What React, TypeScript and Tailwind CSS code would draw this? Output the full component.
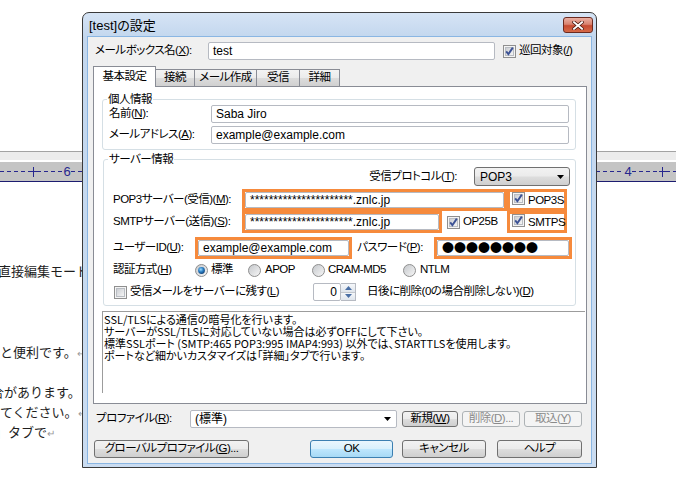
import React from "react";

const DASH =
  "h-px bg-[repeating-linear-gradient(90deg,#26268e_0px,#26268e_4px,transparent_4px,transparent_7px)]";

const U = ({ children }: { children: React.ReactNode }) => (
  <span className="underline underline-offset-[1px]">{children}</span>
);

const Check = ({ checked }: { checked?: boolean }) => (
  <svg width="13" height="13" viewBox="0 0 13 13" className="shrink-0">
    <defs>
      <linearGradient id="cbInner" x1="0" y1="0" x2="1" y2="1">
        <stop offset="0" stopColor="#c9ccd1" />
        <stop offset="1" stopColor="#f7f7f7" />
      </linearGradient>
    </defs>
    <rect x="0.5" y="0.5" width="12" height="12" fill="#f4f4f4" stroke="#8f8f8f" />
    <rect x="2.5" y="2.5" width="8" height="8" fill="url(#cbInner)" stroke="#b9bdc3" />
    {checked && (
      <path d="M3.2 6.4 L5.4 9.2 L9.8 2.6" fill="none" stroke="#3c5295" strokeWidth="1.9" />
    )}
  </svg>
);

const Radio = ({ checked }: { checked?: boolean }) => (
  <svg width="13" height="13" viewBox="0 0 13 13" className="shrink-0">
    <defs>
      <linearGradient id="rdBg" x1="0" y1="0" x2="1" y2="1">
        <stop offset="0" stopColor="#c3c6ca" />
        <stop offset="1" stopColor="#f8f8f8" />
      </linearGradient>
      <radialGradient id="rdDot" cx="0.4" cy="0.35" r="0.7">
        <stop offset="0" stopColor="#9edbff" />
        <stop offset="0.5" stopColor="#2b7fc4" />
        <stop offset="1" stopColor="#0f3e74" />
      </radialGradient>
    </defs>
    <circle cx="6.5" cy="6.5" r="6" fill="url(#rdBg)" stroke="#8f8f8f" />
    {checked && <circle cx="6.5" cy="6.5" r="3.4" fill="url(#rdDot)" />}
  </svg>
);

const Arrow = () => (
  <svg width="7" height="4" viewBox="0 0 7 4" className="shrink-0">
    <path d="M0 0H7L3.5 4Z" fill="#000" />
  </svg>
);

const Box = ({ className, children }: { className: string; children?: React.ReactNode }) => (
  <div
    className={
      "bg-white border border-[#b6bac2] rounded-[2px] flex items-center px-[4px] text-[12px] tracking-normal whitespace-nowrap overflow-hidden " +
      className
    }
  >
    {children}
  </div>
);

const BTN =
  "flex items-center justify-center rounded-[3px] border border-[#707070] bg-[linear-gradient(#f2f2f2,#ebebeb_48%,#dddddd_52%,#cfcfcf)] whitespace-nowrap";
const BTN_OFF =
  "flex items-center justify-center rounded-[3px] border border-[#adb2b5] bg-[#f4f4f4] text-[#8a8a8a] whitespace-nowrap";

function Background() {
  return (
    <div className="flex flex-col">
      <div className="h-[151px]" />
      <div className="h-px bg-[#a3a3a3]" />
      <div className="h-[8px] bg-[#ececec]" />
      <div className="h-[2px] bg-white" />
      <div className="h-[20px] bg-[#c4c4c4] border-b border-[#1c1c70] flex items-center text-[#26268e] text-[13px] leading-none">
        <div className={DASH + " w-[30px]"} />
        <div className="w-[7px] h-[10px] flex justify-center bg-[linear-gradient(#26268e,#26268e)] bg-no-repeat bg-center bg-[length:100%_1px]">
          <div className="w-px h-full bg-[#26268e]" />
        </div>
        <div className={DASH + " w-[26px]"} />
        <div className="w-[8px] text-center">6</div>
        <div className={DASH + " flex-1"} />
        <div className="w-[8px] text-center">4</div>
        <div className={DASH + " w-[27px]"} />
        <div className="w-[7px] h-[10px] flex justify-center bg-[linear-gradient(#26268e,#26268e)] bg-no-repeat bg-center bg-[length:100%_1px]">
          <div className="w-px h-full bg-[#26268e]" />
        </div>
        <div className={DASH + " w-[10px]"} />
      </div>
      <div className="font-['Noto_Sans_CJK_JP',sans-serif] [font-feature-settings:normal] text-[13px] leading-[20px] text-[#1e1e1e] whitespace-nowrap">
        <div className="mt-[79px] h-[20px] -ml-[2px]">直接編集モード</div>
        <div className="mt-[61px] h-[20px]">
          と便利です。<span className="text-[10px] text-[#999]">↵</span>
        </div>
        <div className="mt-[20px] h-[20px] -ml-[9px]">合があります。</div>
        <div className="h-[20px]">
          てください。<span className="text-[10px] text-[#999]">↵</span>
        </div>
        <div className="h-[20px] -ml-[5px]">
          <span className="text-[#b03a6a]">」</span>タブで<span className="text-[10px] text-[#999]">↵</span>
        </div>
      </div>
    </div>
  );
}

function CloseBtn() {
  return (
    <div className="ml-auto w-[30px] h-[16px] rounded-[3px] border border-[#6b2a20] bg-[linear-gradient(#eab0a3,#d9826f_45%,#c64a31_55%,#d66a48)] flex items-center justify-center">
      <svg width="12" height="9" viewBox="0 0 12 9">
        <path d="M2 1.2L10 7.8M10 1.2L2 7.8" stroke="#4b1a12" strokeWidth="3.4" strokeLinecap="square" />
        <path d="M2 1.2L10 7.8M10 1.2L2 7.8" stroke="#fff" strokeWidth="1.9" strokeLinecap="square" />
      </svg>
    </div>
  );
}

function Tabs() {
  return (
    <div className="mt-[6px] h-[20px] flex items-end pl-[5px] whitespace-nowrap">
      <div className="relative z-10 -mb-px w-[63px] h-[21px] bg-white border border-b-0 border-[#898c95] flex items-start justify-center pt-[1px]">
        基本設定
      </div>
      {[
        ["接続", "w-[40px]"],
        ["メール作成", "w-[63px]"],
        ["受信", "w-[44px]"],
        ["詳細", "w-[41px]"],
      ].map(([t, w]) => (
        <div
          key={t}
          className={
            w +
            " -ml-px h-[17px] border border-b-0 border-[#898c95] bg-[linear-gradient(#f3f3f3,#ebebeb_50%,#dcdcdc_52%,#d0d0d0)] flex items-center justify-center"
          }
        >
          {t}
        </div>
      ))}
    </div>
  );
}

function Orange({ className, children }: { className: string; children?: React.ReactNode }) {
  return <div className={"border-[3px] border-[#f68a3c] flex items-stretch " + className}>{children}</div>;
}

function Panel() {
  return (
    <div className="relative ml-[5px] w-[494px] h-[318px] border border-[#898c95] bg-white flex flex-col whitespace-nowrap">
      <fieldset className="ml-[8px] mt-[6px] w-[474px] border border-[#d5dfe5] rounded-[3px] pb-[5px]">
        <legend className="ml-[4px] px-[1px] leading-[12px]">個人情報</legend>
        <div className="h-[18px] flex items-center pl-[6px]">
          <div className="w-[102px]">
            名前(<U>N</U>):
          </div>
          <Box className="w-[358px] h-[18px]">Saba Jiro</Box>
        </div>
        <div className="mt-[3px] h-[18px] flex items-center pl-[6px]">
          <div className="w-[102px]">
            メールアドレス(<U>A</U>):
          </div>
          <Box className="w-[358px] h-[18px]">example@example.com</Box>
        </div>
      </fieldset>

      <fieldset className="ml-[9px] mt-[3px] w-[473px] border border-[#d5dfe5] rounded-[3px] pb-[4px]">
        <legend className="ml-[4px] px-[1px] leading-[12px]">サーバー情報</legend>
        <div className="mt-[2px] h-[19px] flex items-center justify-end pr-[5px]">
          <div className="mr-[17px]">
            受信プロトコル(<U>T</U>):
          </div>
          <div className="w-[96px] h-[19px] rounded-[3px] border border-[#707070] bg-[linear-gradient(#f2f2f2,#ebebeb_48%,#dddddd_52%,#cfcfcf)] flex items-center justify-between pl-[5px] pr-[5px] text-[12px] tracking-normal">
            <span>POP3</span>
            <Arrow />
          </div>
        </div>

        <div className="mt-[3px] h-[22px] flex items-center pl-[9px]">
          <div className="w-[129px]">
            POP3サーバー(受信)(<U>M</U>):
          </div>
          <Orange className="w-[265px] h-[22px]">
            <Box className="flex-1">**********************.znlc.jp</Box>
          </Orange>
          <Orange className="w-[60px] h-[22px] items-center pl-[2px] gap-[3px]">
            <Check checked />
            <span>POP3S</span>
          </Orange>
        </div>

        <div className="h-[22px] flex items-center pl-[9px]">
          <div className="w-[129px]">
            SMTPサーバー(送信)(<U>S</U>):
          </div>
          <Orange className="w-[200px] h-[22px]">
            <Box className="flex-1">**********************.znlc.jp</Box>
          </Orange>
          <div className="w-[65px] flex items-center pl-[5px] gap-[3px]">
            <Check checked />
            <span>OP25B</span>
          </div>
          <Orange className="w-[60px] h-[22px] items-center pl-[2px] gap-[3px]">
            <Check checked />
            <span>SMTPS</span>
          </Orange>
        </div>

        <div className="mt-[4px] h-[22px] flex items-center pl-[9px]">
          <div className="w-[82px]">
            ユーザーID(<U>U</U>):
          </div>
          <Orange className="w-[157px] h-[22px]">
            <Box className="flex-1">example@example.com</Box>
          </Orange>
          <div className="w-[82px] pl-[5px]">
            パスワード(<U>P</U>):
          </div>
          <Orange className="w-[138px] h-[22px]">
            <Box className="flex-1 font-['Noto_Sans_CJK_JP',sans-serif] [font-feature-settings:normal]">●●●●●●●●</Box>
          </Orange>
        </div>

        <div className="mt-[2px] h-[18px] flex items-center pl-[9px]">
          <div className="w-[82px]">
            認証方式(<U>H</U>)
          </div>
          <div className="w-[53px] flex items-center gap-[3px]">
            <Radio checked />
            <span>標準</span>
          </div>
          <div className="w-[64px] flex items-center gap-[4px]">
            <Radio />
            <span>APOP</span>
          </div>
          <div className="w-[91px] flex items-center gap-[3px]">
            <Radio />
            <span>CRAM-MD5</span>
          </div>
          <div className="flex items-center gap-[4px]">
            <Radio />
            <span>NTLM</span>
          </div>
        </div>

        <div className="mt-[4px] h-[18px] flex items-center pl-[10px]">
          <div className="w-[199px] flex items-center gap-[3px]">
            <Check />
            <span>
              受信メールをサーバーに残す(<U>L</U>)
            </span>
          </div>
          <Box className="w-[28px] h-[18px] justify-end pr-[3px]">0</Box>
          <div className="w-[15px] h-[18px] flex flex-col border border-[#b6bac2] border-l-0">
            <div className="flex-1 border-b border-[#c2c6cc] bg-[linear-gradient(#f5f7fa,#dfe5ec)] flex items-center justify-center">
              <svg width="7" height="4" viewBox="0 0 7 4">
                <path d="M0 4H7L3.5 0Z" fill="#4a6fa5" />
              </svg>
            </div>
            <div className="flex-1 bg-[linear-gradient(#f5f7fa,#dfe5ec)] flex items-center justify-center">
              <svg width="7" height="4" viewBox="0 0 7 4">
                <path d="M0 0H7L3.5 4Z" fill="#4a6fa5" />
              </svg>
            </div>
          </div>
          <div className="ml-[11px]">
            日後に削除(0の場合削除しない)(<U>D</U>)
          </div>
        </div>
      </fieldset>

      <div className="ml-[8px] mt-[5px] w-[483px] h-[82px] border-l border-t border-[#9c9c9c] pl-[1px] pt-px font-['Noto_Sans_CJK_JP',sans-serif] text-[11px] leading-[12px] tracking-normal">
        <div>SSL/TLSによる通信の暗号化を行います。</div>
        <div>サーバーがSSL/TLSに対応していない場合は必ずOFFにして下さい。</div>
        <div>標準SSLポート (SMTP:465 POP3:995 IMAP4:993) 以外では、STARTTLSを使用します。</div>
        <div>ポートなど細かいカスタマイズは「詳細」タブで行います。</div>
      </div>
    </div>
  );
}

function Dialog() {
  return (
    <div className="absolute left-[82px] top-[12px] w-[515px] h-[456px] border border-[#3a3a3a] rounded-t-[7px] bg-[linear-gradient(#d6e4f5,#c3d7ee_24px,#cadcf1)] flex flex-col">
      <div className="h-[24px] flex items-center pl-[6px] pr-[3px]">
        <span className="text-[13px] leading-none">[test]の設定</span>
        <CloseBtn />
      </div>
      <div className="flex-1 px-[5px] pb-[4px] flex">
        <div className="flex-1 bg-[#f0f0f0] shadow-[0_0_0_1px_#8ab6e3] flex flex-col whitespace-nowrap text-[11.5px] tracking-[-0.5px]">
          <div className="mt-[5px] h-[18px] flex items-center pl-[7px]">
            <div className="w-[113px]">
              メールボックス名(<U>X</U>):
            </div>
            <Box className="w-[287px] h-[18px]">test</Box>
            <div className="ml-[8px] flex items-center gap-[3px]">
              <Check checked />
              <span>
                巡回対象(<U>/</U>)
              </span>
            </div>
          </div>

          <Tabs />
          <Panel />

          <div className="mt-[6px] h-[18px] flex items-center pl-[8px]">
            <div className="w-[94px]">
              プロファイル(<U>R</U>):
            </div>
            <Box className="w-[207px] h-[18px] justify-between pr-[5px]">
              <span>(標準)</span>
              <Arrow />
            </Box>
            <div className={BTN + " ml-[5px] w-[56px] h-[16px]"}>
              新規(<U>W</U>)
            </div>
            <div className={BTN_OFF + " ml-[4px] w-[58px] h-[16px]"}>
              削除(<U>D</U>)...
            </div>
            <div className={BTN_OFF + " ml-[4px] w-[58px] h-[16px]"}>
              取込(<U>Y</U>)
            </div>
          </div>

          <div className="mt-[12px] h-[18px] flex items-center pl-[6px]">
            <div className={BTN + " w-[155px] h-[18px]"}>
              グローバルプロファイル(<U>G</U>)...
            </div>
            <div className="ml-[61px] w-[83px] h-[18px] rounded-[3px] border border-[#3c7fb1] bg-[linear-gradient(#eaf6fd,#d9f0fc_48%,#bee6fd_52%,#a7d9f5)] flex items-center justify-center">
              OK
            </div>
            <div className={BTN + " ml-[9px] w-[84px] h-[18px]"}>キャンセル</div>
            <div className={BTN + " ml-[11px] w-[85px] h-[18px]"}>ヘルプ</div>
          </div>
        </div>
      </div>
    </div>
  );
}

export default function App() {
  return (
    <div className="relative w-[676px] h-[481px] overflow-hidden bg-white font-['Liberation_Sans','Noto_Sans_CJK_JP',sans-serif] text-black text-[12px] [font-feature-settings:'palt']">
      <Background />
      <Dialog />
    </div>
  );
}
